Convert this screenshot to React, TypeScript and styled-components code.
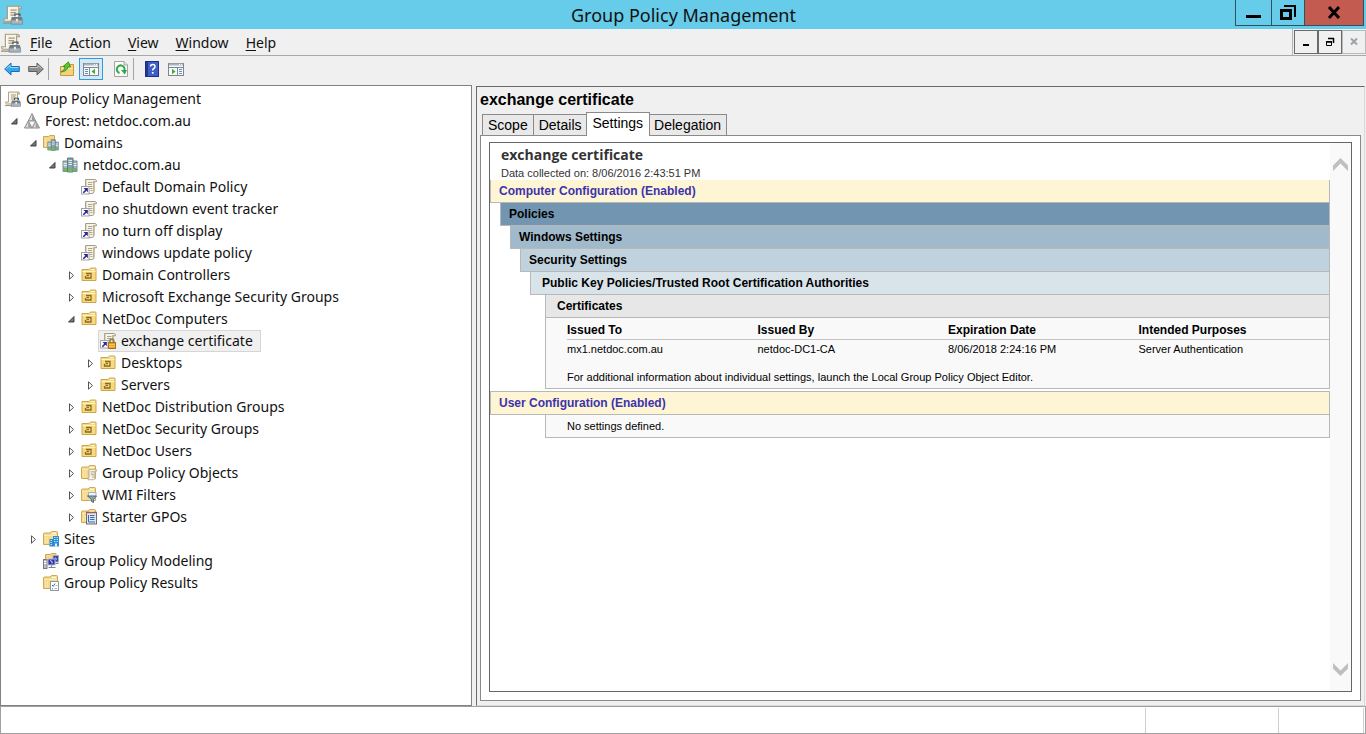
import React, { useState } from "react";
import styled, { createGlobalStyle, css } from "styled-components";

const GlobalStyle = createGlobalStyle`
  * { box-sizing: border-box; }
  html, body { margin: 0; }
  body { background: #f0f0f0; }
  button, table { font: inherit; color: inherit; }
`;

const uiFont = `"Noto Sans", "Open Sans", sans-serif`;
const dialogFont = `"Liberation Sans", Arial, sans-serif`;

/* ---------- window frame ---------- */

const Window = styled.div`
  display: flex;
  flex-direction: column;
  min-height: 100vh;
  background: #f0f0f0;
  color: #111;
  font-family: ${uiFont};
  font-size: 14px;
`;

const TitleBar = styled.header`
  display: grid;
  grid-template-columns: 1fr auto 1fr;
  height: 29px;
  padding: 0 2px 0 3px;
  background: #67cbea;
`;

const AppIcon = styled.span`
  display: flex;
  padding-top: 5px;
`;

const WindowTitle = styled.h1`
  margin: 0;
  font-size: 18px;
  font-weight: 400;
  line-height: 30px;
`;

const WindowButtons = styled.div`
  display: flex;
  justify-content: flex-end;
`;

const WindowButton = styled.button<{ $w: number; $close?: boolean }>`
  display: flex;
  align-items: center;
  justify-content: center;
  width: ${(p) => p.$w}px;
  height: 26px;
  margin-left: -1px;
  padding: 0;
  border: 1px solid #2b5462;
  border-top: 0;
  background: ${(p) => (p.$close ? "#c35b50" : "#67cbea")};
`;

const MenuBar = styled.div`
  display: flex;
  align-items: stretch;
  height: 27px;
  border-bottom: 1px solid #a9a9a9;
`;

const MenuList = styled.nav`
  display: flex;
  flex: 1;
  gap: 1px;
  align-items: center;
  padding: 2px 0 0 1px;
  border-right: 1px solid #b4b4b4;
`;

const MenuItem = styled.button`
  margin: 0;
  padding: 0 8px;
  border: 0;
  background: none;
  line-height: 24px;
  u { text-underline-offset: 2px; }
`;

const ChildButtons = styled.div`
  display: flex;
  padding: 1px 0 0 1px;
`;

const ChildButton = styled.button<{ $dim?: boolean }>`
  display: flex;
  align-items: center;
  justify-content: center;
  width: 24px;
  height: 24px;
  padding: 0;
  border: 1px solid ${(p) => (p.$dim ? "#b9b9b9" : "#6b6b6b")};
  background: #f0f0f0;
`;

const Toolbar = styled.div`
  display: flex;
  align-items: center;
  height: 29px;
  padding-bottom: 4px;
`;

const ToolGroup = styled.div<{ $ruled?: boolean }>`
  display: flex;
  margin-right: 6px;
  border-right: ${(p) => (p.$ruled ? "1px solid #a5a5a5" : "0")};
`;

const ToolButton = styled.button<{ $on?: boolean }>`
  display: flex;
  align-items: center;
  justify-content: center;
  width: 24px;
  height: 22px;
  padding: 0;
  border: 1px solid ${(p) => (p.$on ? "#3399dd" : "transparent")};
  background: ${(p) => (p.$on ? "#d4e9f8" : "none")};
`;

/* ---------- tree ---------- */

const Workspace = styled.main`
  display: grid;
  grid-template-columns: 472px minmax(0, 1fr);
  gap: 4px;
  flex: 1;
  padding-right: 1px;
`;

const TreePane = styled.aside`
  padding-top: 2px;
  border: 1px solid #828282;
  background: #fff;
`;

const TreeList = styled.ul`
  margin: 0;
  padding: 0;
  list-style: none;
`;

const TreeRow = styled.div<{ $level: number }>`
  display: flex;
  height: 22px;
  padding-left: ${(p) => (p.$level === 0 ? 2 : 19 * p.$level - 15)}px;
`;

const Expander = styled.button`
  display: flex;
  align-items: center;
  justify-content: center;
  width: 17px;
  padding: 0 0 0 2px;
  border: 0;
  background: none;
`;

const ExpanderSpace = styled.span`
  width: 17px;
`;

const TreeLabel = styled.button<{ $selected: boolean }>`
  display: flex;
  align-items: center;
  gap: 5px;
  height: 22px;
  padding: 0 7px 0 1px;
  border: 1px solid ${(p) => (p.$selected ? "#d6d6d6" : "transparent")};
  background: ${(p) => (p.$selected ? "#f0f0f0" : "none")};
  line-height: 20px;
  white-space: nowrap;
`;

/* ---------- details ---------- */

const DetailsPane = styled.section`
  display: flex;
  flex-direction: column;
  min-width: 0;
  margin-top: 1px;
  padding: 3px 3px 4px;
  border: 1px solid #d8d8d8;
  border-top-color: #696969;
  border-left-color: #696969;
  font-family: ${dialogFont};
  color: #000;
`;

const PaneHeading = styled.h2`
  margin: 0;
  font-size: 16px;
  font-weight: 700;
  line-height: 19px;
`;

const TabStrip = styled.div`
  display: flex;
  align-items: flex-end;
  height: 26px;
  padding-left: 2px;
`;

const Tab = styled.button<{ $active: boolean }>`
  height: 21px;
  margin-right: -1px;
  padding: 0 5px;
  border: 1px solid #8a8a8a;
  border-bottom: 0;
  background: #e9e9e9;
  line-height: 20px;
  ${(p) =>
    p.$active &&
    css`
      z-index: 1;
      height: 24px;
      margin: 0 -2px -1px -1px;
      padding: 0 6px 3px;
      background: #fff;
    `}
`;

const TabPanel = styled.div`
  display: flex;
  flex: 1;
  padding: 6px 8px 8px;
  border: 1px solid #8a8a8a;
  background: #fff;
`;

const ReportFrame = styled.div`
  display: flex;
  flex: 1;
  min-width: 0;
  border: 1px solid #666;
`;

const Report = styled.article`
  flex: 1;
  min-width: 0;
  font-size: 11px;
  color: #000;
`;

const ReportHead = styled.header`
  height: 37px;
  padding: 3px 0 0 11px;
  color: #333;
`;

const ReportTitle = styled.h3`
  margin: 0;
  font-family: "Open Sans", sans-serif;
  font-size: 14px;
  font-weight: 700;
  line-height: 18px;
`;

const ReportDate = styled.p`
  margin: 0;
  line-height: 19px;
`;

const Band = styled.h4<{ $indent: number; $pad: number; $bg: string; $link?: boolean }>`
  height: 23px;
  margin: 0 0 0 ${(p) => p.$indent}px;
  padding-left: ${(p) => p.$pad}px;
  border: 1px solid #b8b8b8;
  border-top: 0;
  background: ${(p) => p.$bg};
  color: ${(p) => (p.$link ? "#3d33ad" : "#000")};
  font-size: 12px;
  font-weight: 700;
  line-height: 22px;
  white-space: nowrap;
`;

const UserSection = styled.section`
  margin-top: 2px;
  border-top: 1px solid #b8b8b8;
`;

const BandBody = styled.div`
  margin-left: 55px;
  padding-left: 21px;
  border: 1px solid #b8b8b8;
  border-top: 0;
  background: #f9f9f9;
`;

const CertTable = styled.table`
  width: 100%;
  border-collapse: collapse;
  table-layout: fixed;
  th, td {
    padding: 0;
    text-align: left;
  }
  th {
    height: 21px;
    padding-top: 4px;
    border-bottom: 1px solid #c4c4c4;
    font-size: 12px;
    line-height: 16px;
  }
  td { height: 20px; }
`;

const Note = styled.p<{ $top?: number }>`
  margin: 0;
  padding-top: ${(p) => p.$top ?? 0}px;
  line-height: 22px;
`;

const ScrollBar = styled.div`
  display: flex;
  flex-direction: column;
  justify-content: space-between;
  width: 21px;
  padding: 13px 0;
  background: #f9f9f9;
`;

const ScrollButton = styled.button`
  display: flex;
  justify-content: center;
  padding: 0;
  border: 0;
  background: none;
`;

const StatusBar = styled.footer`
  display: grid;
  grid-template-columns: 1fr 133px 85px;
  height: 28px;
  padding: 1px 1px 0 0;
  border: 1px solid #a0a0a0;
  background: #fff;
`;

const StatusCell = styled.span`
  border-right: 1px solid #d0d0d0;
`;

/* ---------- icons ---------- */

const IconSvg = styled.svg`
  flex: none;
`;

const Svg = ({ children, w = 16, h = 16 }: { children: React.ReactNode; w?: number; h?: number }) => (
  <IconSvg width={w} height={h} viewBox={`0 0 ${w} ${h}`} aria-hidden="true">
    {children}
  </IconSvg>
);

const ConsoleArt = () => (
  <>
    <path d="M3.500 1h9.500q1.700 0 1.700 2H12.500v10H1.500q-1-.3-1-2h3z" fill="#f8f2df" stroke="#a39b86" strokeWidth=".9" />
    <path d="M12.500 3V2q.4-1 1-1" fill="none" stroke="#b5a77c" />
    <path d="M4.500 2v9" stroke="#fffdf4" />
    <path d="M6 4h5M6 6h4.500M6 8h3" stroke="#9f9884" />
    <path d="M0 14.500h8" stroke="#a29a84" strokeWidth="1.200" />
    <path d="M9.500 9V7.300h4V9" fill="none" stroke="#4e5964" strokeWidth="1.100" />
    <path d="M7 9.500h8l.7 2.500H6.400z" fill="#6e7a87" />
    <rect x="6.500" y="12" width="9" height="3.300" fill="#aab3bb" stroke="#7b858e" strokeWidth=".6" />
    <path d="M10.300 11h1.800v2.200h-1.800z" fill="#ebe5d0" />
  </>
);

const FolderArt = () => (
  <>
    <path d="M.5 3q0-1 1-1H7l1.500-1.500h5q1 0 1 1V13.500H.5z" fill="#f5d98a" stroke="#d0a84e" />
    <path d="M9 2.500h4" stroke="#fffbe8" strokeWidth="1.400" />
    <path d="M1 4.500h13" stroke="#fbebb8" />
    <path d="M2.500 6v6.500M4.500 6v6.500" stroke="#fae6aa" />
  </>
);

const BuildingsArt = () => (
  <>
    <path d="M1 4h4.500v10.500H1zM11 4h4v10.500h-4z" fill="#a4b8be" stroke="#728a95" />
    <path d="M5.500 1h5.500v14H5.500z" fill="#86a0ab" stroke="#647c88" />
    <path d="M6.500 3.500h3.500M6.500 5.500h3.500M6.500 7.500h3.500M1.500 6.500h3.500M1.500 8.500h3.500M11.500 6.500h3M11.500 8.500h3" stroke="#dfeaee" />
    <path d="M1 11h4v3.500H1zM11 11h4v3.500h-4zM6 11h4.500v3.500H6z" fill="#77a878" />
    <path d="M7.300 11.500h2V15h-2zM2.500 12h1.300v2.500H2.500z" fill="#62c84e" />
  </>
);

const ScrollArt = () => (
  <>
    <path d="M4.500.5h9.700q1.300 0 1.300 2.300H13V12.500q-.3 2-2 2H3.500V12h1z" fill="#f8f4e6" stroke="#a39c89" />
    <path d="M12.700 2v10.500" stroke="#c3b78f" strokeWidth="1.400" />
    <path d="M5.300 1.500v10" stroke="#d2cdbd" />
    <path d="M7 3.500h4.500M7 5.500h4M7 7.500h4.500M8.500 9.500h3M9.500 11.500h2" stroke="#aaa493" />
  </>
);

const ShortcutArt = () => (
  <>
    <rect x=".5" y="7.500" width="7.500" height="7.500" fill="#fff" stroke="#a3a3a3" />
    <path d="M2.500 9h4.300v4.300z" fill="#2b2492" />
    <path d="M2.300 13.700l3-3" stroke="#2b2492" strokeWidth="1.600" />
  </>
);

const icons: Record<string, React.ReactNode> = {
  console: <ConsoleArt />,
  forest: (
    <>
      <path d="M8 .5l3.700 7.500H4.300z" fill="#e4e4e4" stroke="#808080" strokeWidth=".9" />
      <path d="M4.200 8L8 15H.5z" fill="#dcdcdc" stroke="#808080" strokeWidth=".9" />
      <path d="M11.800 8l3.700 7H8z" fill="#dcdcdc" stroke="#808080" strokeWidth=".9" />
      <path d="M4.300 8h7.400L8 15z" fill="#f7f7f7" stroke="#8c8c8c" strokeWidth=".9" />
      <path d="M8 1.800l2.800 5.700H8zM4.300 9.300L7 14.500H4.300zM11.800 9.300l2.700 5.200h-2.700z" fill="#999" />
    </>
  ),
  domains: (
    <>
      <path d="M.5 1.500h5L7 .5h4.500v12H.5z" fill="#f3d68a" stroke="#cfa850" />
      <path d="M2.500 3v9" stroke="#fae6aa" />
      <g transform="translate(4 4) scale(.76)"><BuildingsArt /></g>
    </>
  ),
  domain: <BuildingsArt />,
  link: (
    <>
      <ScrollArt />
      <ShortcutArt />
    </>
  ),
  locked: (
    <>
      <ScrollArt />
      <ShortcutArt />
      <path d="M10 10V7.800q0-1.800 1.900-1.800t1.900 1.800V10" fill="none" stroke="#8b7a4a" strokeWidth="1.400" />
      <rect x="8.500" y="9.500" width="7" height="6" fill="#e3a02a" stroke="#a8741a" />
      <path d="M9 11.500h6M9 13.500h6" stroke="#f6c95c" />
    </>
  ),
  ou: (
    <>
      <path d="M1 2.500h7L9.500 1h5q.5 0 .5.500v12H1z" fill="#f6d983" stroke="#cfa646" />
      <path d="M10 2.500h4M1.500 4.500h13" stroke="#fff4c8" />
      <path d="M5 6.500h5v4.500H4.500V9" fill="none" stroke="#8a6b1c" strokeWidth="1.300" />
      <path d="M5.500 8.500h2.500" stroke="#8a6b1c" strokeWidth="1.400" />
    </>
  ),
  gpos: (
    <>
      <FolderArt />
      <g transform="translate(4.500 4) scale(.74)"><ScrollArt /></g>
    </>
  ),
  wmi: (
    <>
      <FolderArt />
      <rect x="7.500" y="5.500" width="7.500" height="4" fill="#eef3f6" stroke="#a7b0b6" />
      <path d="M6.500 9h9l-3 3.300v3.200l-2-1v-2.200z" fill="#87a5bc" stroke="#4e6d88" />
    </>
  ),
  starter: (
    <>
      <FolderArt />
      <rect x="5.500" y="3.500" width="10" height="11.500" fill="#dde6f3" stroke="#6d6a70" />
      <path d="M5 3.500h11" stroke="#a45b4a" strokeWidth="1.500" />
      <path d="M9 6.500h4.500M9 8.500h4.500M9 10.500h4.500M7.500 6v7h6.500" fill="none" stroke="#3f68ac" />
    </>
  ),
  sites: (
    <>
      <FolderArt />
      <path d="M6.500 8H10V5h6v10.500H6.500z" fill="#2f8bd3" />
      <path d="M7.500 9.500H9M7.500 11.500H9M7.500 13.500H9M11 6.500h1.500M13.500 6.500H15M11 8.500h1.500M13.500 8.500H15M11 10.500h1.500M13.500 10.500H15" stroke="#aee2fb" />
      <path d="M12 12.500h2v3h-2z" fill="#e9f7ff" />
    </>
  ),
  modeling: (
    <>
      <path d="M2.500 1.500H7L8.500.5H13v8H2.500z" fill="#f3d78d" stroke="#cfa850" />
      <rect x=".5" y="6.500" width="3.500" height="9" fill="#b9bec6" stroke="#757b86" />
      <path d="M1 8.500h2.500M1 10.500h2.500" stroke="#fff" />
      <rect x="10" y="2.500" width="5.500" height="6.500" fill="#3543b4" stroke="#a9aebb" />
      <rect x="5" y="6" width="7" height="6" fill="#2a34a8" stroke="#b4b9c6" />
      <path d="M7 7.500l2 1v2M12.500 4.500l1 2" stroke="#d9e0ff" fill="none" />
      <path d="M5.500 14.500h7M8.500 12.500v2M12.500 10.500h3" stroke="#7b8190" />
    </>
  ),
  results: (
    <>
      <FolderArt />
      <rect x="7.500" y="6.500" width="8" height="9" fill="#fff" stroke="#8c9aa6" />
      <path d="M9 10l1.300 1.300L12 8.500M9 13.500l1 .8" stroke="#2f6fc0" fill="none" />
      <path d="M12.500 10.500h2M11.500 13.500h2.500" stroke="#a9b4bc" />
    </>
  ),
};

const Icon = ({ name }: { name: string }) => <Svg>{icons[name]}</Svg>;

const FrameIcon = () => (
  <Svg w={20} h={20}>
    <g transform="scale(1.250)"><ConsoleArt /></g>
  </Svg>
);

const BlueArrow = () => (
  <Svg>
    <path d="M.7 8l6.300-6v3.500h8.300v5H7V14z" fill="#35a8ec" stroke="#1a6fb4" />
    <path d="M2.500 7.500L6 4.200v2.300h8.500" fill="none" stroke="#8fd6fb" />
  </Svg>
);
const GreyArrow = () => (
  <Svg>
    <path d="M15.300 8L9 2v3.500H.7v5H9V14z" fill="#8e8e8e" stroke="#5f5f5f" />
    <path d="M1.500 6.500H10V4.200l3.500 3.300" fill="none" stroke="#c6c6c6" />
  </Svg>
);
const UpFolder = () => (
  <Svg>
    <path d="M1.500 5.500h8l1.500-2h3.500v11h-13z" fill="#f5d27a" stroke="#c69a3c" />
    <path d="M2 7.500h12" stroke="#fbe7ac" />
    <path d="M2 11Q6 9.500 6 5.500H4L9.500.8 11.500 6H9Q8 10.500 2 11z" fill="#58c833" stroke="#2e8a18" strokeWidth=".8" />
  </Svg>
);
const PaneIcon = ({ right }: { right?: boolean }) => (
  <Svg>
    <rect x=".5" y="2.500" width="15" height="12" fill="#f7f9fb" stroke="#7c8792" />
    <path d="M1 3.500h14" stroke="#a9b5c0" strokeWidth="2" />
    <path d="M1 6.500h14" stroke="#7c8792" />
    <path d="M11 3.500h1M13 3.500h1" stroke="#fff" />
    {right ? (
      <>
        <path d="M9.500 7v7.500" stroke="#7c8792" />
        <path d="M11 8.500h3M11 10.500h3M11 12.500h3" stroke="#6b8fb4" />
        <path d="M4 7.800v5.400l3.500-2.700z" fill="#3fae2a" />
      </>
    ) : (
      <>
        <path d="M6.500 7v7.500" stroke="#7c8792" />
        <path d="M2 8.500h3M2 10.500h3M2 12.500h3" stroke="#6b8fb4" />
        <path d="M12 7.800v5.400l-3.500-2.700z" fill="#3fae2a" />
      </>
    )}
  </Svg>
);
const RefreshIcon = () => (
  <Svg>
    <path d="M1.500.5h9.500l3.500 3.500v11.500h-13z" fill="#fbfbfb" stroke="#a3a3a3" />
    <path d="M11 .5V4h3.500" fill="#e4e4e4" stroke="#a3a3a3" />
    <path d="M6.500 12A3.900 3.900 0 1 1 11.400 9.500" fill="none" stroke="#2fa84a" strokeWidth="2" />
    <path d="M8 9h6l-2.200 4.500z" fill="#2fa84a" />
  </Svg>
);
const HelpIcon = () => (
  <Svg>
    <rect x="1.500" y=".5" width="13" height="15" fill="#3f5fc8" stroke="#1d2f86" />
    <path d="M3 1v14" stroke="#24378f" strokeWidth="2" />
    <path d="M6.500 5.500q0-2 2.300-2t2.200 2q0 1.500-1.500 2.200-.8.500-.8 1.800" fill="none" stroke="#fff" strokeWidth="1.500" />
    <rect x="7.900" y="11" width="1.700" height="1.700" fill="#fff" />
  </Svg>
);

/* ---------- data ---------- */

type Node = { name: string; icon: string; children?: Node[]; more?: boolean };

const tree: Node = {
  name: "Group Policy Management",
  icon: "console",
  children: [
    {
      name: "Forest: netdoc.com.au",
      icon: "forest",
      children: [
        {
          name: "Domains",
          icon: "domains",
          children: [
            {
              name: "netdoc.com.au",
              icon: "domain",
              children: [
                { name: "Default Domain Policy", icon: "link" },
                { name: "no shutdown event tracker", icon: "link" },
                { name: "no turn off display", icon: "link" },
                { name: "windows update policy", icon: "link" },
                { name: "Domain Controllers", icon: "ou", more: true },
                { name: "Microsoft Exchange Security Groups", icon: "ou", more: true },
                {
                  name: "NetDoc Computers",
                  icon: "ou",
                  children: [
                    { name: "exchange certificate", icon: "locked" },
                    { name: "Desktops", icon: "ou", more: true },
                    { name: "Servers", icon: "ou", more: true },
                  ],
                },
                { name: "NetDoc Distribution Groups", icon: "ou", more: true },
                { name: "NetDoc Security Groups", icon: "ou", more: true },
                { name: "NetDoc Users", icon: "ou", more: true },
                { name: "Group Policy Objects", icon: "gpos", more: true },
                { name: "WMI Filters", icon: "wmi", more: true },
                { name: "Starter GPOs", icon: "starter", more: true },
              ],
            },
          ],
        },
        { name: "Sites", icon: "sites", more: true },
        { name: "Group Policy Modeling", icon: "modeling" },
        { name: "Group Policy Results", icon: "results" },
      ],
    },
  ],
};

const menus = ["File", "Action", "View", "Window", "Help"];
const tabs = ["Scope", "Details", "Settings", "Delegation"];
const bands = [
  { text: "Policies", indent: 10, pad: 8, bg: "#7296b2" },
  { text: "Windows Settings", indent: 20, pad: 8, bg: "#a0b9cb" },
  { text: "Security Settings", indent: 30, pad: 8, bg: "#bfd2de" },
  { text: "Public Key Policies/Trusted Root Certification Authorities", indent: 40, pad: 11, bg: "#d9e4ea" },
  { text: "Certificates", indent: 55, pad: 11, bg: "#e7e7e7" },
];

type BranchProps = { node: Node; level: number; selected: string; onSelect: (name: string) => void };

const Branch = ({ node, level, selected, onSelect }: BranchProps) => {
  const [open, setOpen] = useState(Boolean(node.children));
  const expandable = node.children || node.more;
  return (
    <li>
      <TreeRow $level={level}>
        {level > 0 &&
          (expandable ? (
            <Expander aria-label={`Toggle ${node.name}`} aria-expanded={open} onClick={() => setOpen(!open)}>
              <Svg w={9} h={9}>
                {open ? (
                  <path d="M7 1.500v5.500H1.500z" fill="#777" stroke="#333" strokeWidth=".9" />
                ) : (
                  <path d="M2.500.8v7.400l4-3.700z" fill="#fff" stroke="#555" />
                )}
              </Svg>
            </Expander>
          ) : (
            <ExpanderSpace />
          ))}
        <TreeLabel $selected={selected === node.name} onClick={() => onSelect(node.name)}>
          <Icon name={node.icon} />
          {node.name}
        </TreeLabel>
      </TreeRow>
      {open && node.children && (
        <TreeList>
          {node.children.map((child) => (
            <Branch key={child.name} node={child} level={level + 1} selected={selected} onSelect={onSelect} />
          ))}
        </TreeList>
      )}
    </li>
  );
};

export default function App() {
  const [selected, setSelected] = useState("exchange certificate");
  const [tab, setTab] = useState("Settings");

  return (
    <Window>
      <GlobalStyle />
      <TitleBar>
        <AppIcon>
          <FrameIcon />
        </AppIcon>
        <WindowTitle>Group Policy Management</WindowTitle>
        <WindowButtons>
          <WindowButton $w={37} aria-label="Minimize">
            <Svg w={17} h={16}><path d="M1 10h15v3H1z" /></Svg>
          </WindowButton>
          <WindowButton $w={34} aria-label="Restore">
            <Svg w={18} h={18}>
              <path d="M2.500 6.500h9v8h-9z" fill="none" stroke="#000" strokeWidth="3" />
              <path d="M5 2h11V13" fill="none" stroke="#000" strokeWidth="2" />
            </Svg>
          </WindowButton>
          <WindowButton $w={60} $close aria-label="Close">
            <Svg w={14} h={14}><path d="M2 1l10 11M12 1L2 12" stroke="#000" strokeWidth="3" /></Svg>
          </WindowButton>
        </WindowButtons>
      </TitleBar>

      <MenuBar>
        <MenuList aria-label="Main menu">
          <FrameIcon />
          {menus.map((menu) => (
            <MenuItem key={menu}>
              <u>{menu[0]}</u>
              {menu.slice(1)}
            </MenuItem>
          ))}
        </MenuList>
        <ChildButtons>
          <ChildButton aria-label="Minimize console">
            <Svg w={10} h={10}><path d="M2 7h6v2H2z" /></Svg>
          </ChildButton>
          <ChildButton aria-label="Restore console">
            <Svg w={10} h={10}>
              <path d="M3 1.500h6M8.500 1v5M1 5h6" fill="none" stroke="#000" strokeWidth="1.500" />
              <path d="M1.500 4.500h5v4h-5z" fill="none" stroke="#000" />
            </Svg>
          </ChildButton>
          <ChildButton $dim aria-label="Close console">
            <Svg w={10} h={10}><path d="M2 1.500l6 6M8 1.500l-6 6" stroke="#9aa3ad" strokeWidth="2" /></Svg>
          </ChildButton>
        </ChildButtons>
      </MenuBar>

      <Toolbar>
        <ToolGroup $ruled>
          <ToolButton aria-label="Back"><BlueArrow /></ToolButton>
          <ToolButton aria-label="Forward"><GreyArrow /></ToolButton>
        </ToolGroup>
        <ToolGroup>
          <ToolButton aria-label="Up one level"><UpFolder /></ToolButton>
          <ToolButton $on aria-label="Show or hide console tree"><PaneIcon /></ToolButton>
        </ToolGroup>
        <ToolGroup $ruled>
          <ToolButton aria-label="Refresh"><RefreshIcon /></ToolButton>
        </ToolGroup>
        <ToolGroup>
          <ToolButton aria-label="Help"><HelpIcon /></ToolButton>
          <ToolButton aria-label="Show or hide action pane"><PaneIcon right /></ToolButton>
        </ToolGroup>
      </Toolbar>

      <Workspace>
        <TreePane aria-label="Console tree">
          <TreeList>
            <Branch node={tree} level={0} selected={selected} onSelect={setSelected} />
          </TreeList>
        </TreePane>

        <DetailsPane>
          <PaneHeading>exchange certificate</PaneHeading>
          <TabStrip role="tablist">
            {tabs.map((name) => (
              <Tab key={name} role="tab" aria-selected={tab === name} $active={tab === name} onClick={() => setTab(name)}>
                {name}
              </Tab>
            ))}
          </TabStrip>
          <TabPanel role="tabpanel">
            <ReportFrame>
              <Report>
                <ReportHead>
                  <ReportTitle>exchange certificate</ReportTitle>
                  <ReportDate>Data collected on: 8/06/2016 2:43:51 PM</ReportDate>
                </ReportHead>
                <Band $indent={0} $pad={8} $bg="#fdf5d3" $link>Computer Configuration (Enabled)</Band>
                {bands.map((band) => (
                  <Band key={band.text} $indent={band.indent} $pad={band.pad} $bg={band.bg}>{band.text}</Band>
                ))}
                <BandBody>
                  <CertTable>
                    <thead>
                      <tr>
                        <th>Issued To</th>
                        <th>Issued By</th>
                        <th>Expiration Date</th>
                        <th>Intended Purposes</th>
                      </tr>
                    </thead>
                    <tbody>
                      <tr>
                        <td>mx1.netdoc.com.au</td>
                        <td>netdoc-DC1-CA</td>
                        <td>8/06/2018 2:24:16 PM</td>
                        <td>Server Authentication</td>
                      </tr>
                    </tbody>
                  </CertTable>
                  <Note $top={7}>For additional information about individual settings, launch the Local Group Policy Object Editor.</Note>
                </BandBody>
                <UserSection>
                  <Band $indent={0} $pad={8} $bg="#fdf5d3" $link>User Configuration (Enabled)</Band>
                  <BandBody>
                    <Note>No settings defined.</Note>
                  </BandBody>
                </UserSection>
              </Report>
              <ScrollBar>
                <ScrollButton aria-label="Scroll up">
                  <Svg w={17} h={16}><path d="M1 15V9.500L8.500 2 16 9.500V15L8.500 7.500z" fill="#bfbfbf" /></Svg>
                </ScrollButton>
                <ScrollButton aria-label="Scroll down">
                  <Svg w={17} h={16}><path d="M1 1v5.500L8.500 14 16 6.500V1L8.500 8.500z" fill="#bfbfbf" /></Svg>
                </ScrollButton>
              </ScrollBar>
            </ReportFrame>
          </TabPanel>
        </DetailsPane>
      </Workspace>

      <StatusBar>
        <StatusCell />
        <StatusCell />
        <StatusCell />
      </StatusBar>
    </Window>
  );
}
